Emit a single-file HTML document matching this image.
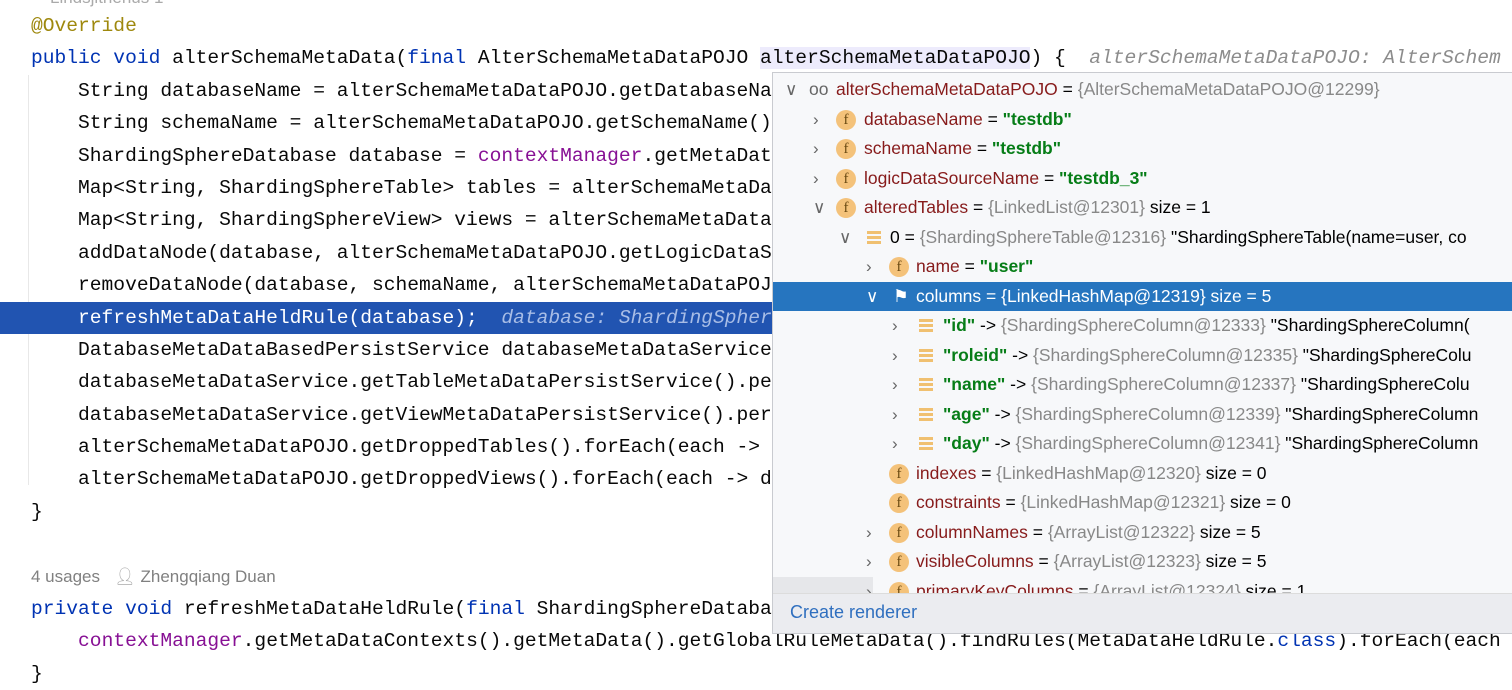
<!DOCTYPE html>
<html><head><meta charset="utf-8"><style>
body{margin:0;width:1512px;height:666px;overflow:hidden;background:#fff;position:relative;font-family:"Liberation Mono",monospace;}
.code{position:absolute;left:0;top:10px;width:1512px;font-size:19.6px;line-height:32.4px;color:#080808;}
.code div{height:32.4px;padding-left:31px;white-space:pre}
.kw{color:#0033b3}.an{color:#9e880d}.pu{color:#871094}.hint{color:#8c8c8c;font-style:italic}
.sel{background:#2154b1;color:#fff}
.sel .hint{color:#a8bde6}
.meta{font-family:"Liberation Sans",sans-serif;font-size:17px;color:#808080}
.guide{position:absolute;left:28px;width:1px;background:#e8e8e8}
.pop{position:absolute;left:772px;top:72px;width:740px;height:560px;background:#f7f8fa;border:1px solid #c9cbd0;border-right:none;font-family:"Liberation Sans",sans-serif;font-size:17.5px;overflow:hidden}
.rows{position:absolute;left:0;top:2px;width:740px;height:518px;overflow:hidden}
.r{position:absolute;left:0;height:29.5px;line-height:29.5px;width:740px;white-space:nowrap}
.r.hl{background:#2675bf;color:#fff}
.ch{position:absolute;top:0;color:#666;font-size:17px}
.hl .ch{color:#fff}
.ic{position:absolute;top:5px;width:20px;height:20px;border-radius:50%;background:#f4c27a;color:#6b4a12;font-size:15px;line-height:20px;text-align:center;font-family:"Liberation Serif",serif}
.ln{position:absolute;top:8px;width:14px;height:14px;background:repeating-linear-gradient(#f0c070 0 3px,transparent 3px 5px)}
.t{position:absolute;top:0}
.n{color:#871b1b}.hl .n{color:#fff}
.g{color:#888}.hl .g{color:#fff}
.s{color:#067d17;font-weight:bold}
.bar{position:absolute;left:0;top:520px;width:740px;height:40px;background:#ebecf0;border-top:1px solid #dcdcdc}
.bar span{position:absolute;left:17px;top:8px;color:#2f6fbf;font-size:18px}
</style></head><body>
<div style="position:absolute;left:50px;top:-12px;font-family:'Liberation Sans',sans-serif;font-size:17px;color:#aaa">Lindsjithenus 1</div>
<div class="guide" style="top:75px;height:410px"></div>
<div class="code"><div class="an">@Override</div><div><span class="kw">public void</span> alterSchemaMetaData(<span class="kw">final</span> AlterSchemaMetaDataPOJO <span style="background:#edebfc">alterSchemaMetaDataPOJO</span>) {  <span class="hint">alterSchemaMetaDataPOJO: AlterSchem</span></div><div>    String databaseName = alterSchemaMetaDataPOJO.getDatabaseName();</div><div>    String schemaName = alterSchemaMetaDataPOJO.getSchemaName();</div><div>    ShardingSphereDatabase database = <span class="pu">contextManager</span>.getMetaData</div><div>    Map&lt;String, ShardingSphereTable&gt; tables = alterSchemaMetaData</div><div>    Map&lt;String, ShardingSphereView&gt; views = alterSchemaMetaData</div><div>    addDataNode(database, alterSchemaMetaDataPOJO.getLogicDataS</div><div>    removeDataNode(database, schemaName, alterSchemaMetaDataPOJ</div><div class="sel">    refreshMetaDataHeldRule(database);  <span class="hint">database: ShardingSphere</span></div><div>    DatabaseMetaDataBasedPersistService databaseMetaDataService</div><div>    databaseMetaDataService.getTableMetaDataPersistService().pe</div><div>    databaseMetaDataService.getViewMetaDataPersistService().per</div><div>    alterSchemaMetaDataPOJO.getDroppedTables().forEach(each -&gt; </div><div>    alterSchemaMetaDataPOJO.getDroppedViews().forEach(each -&gt; d</div><div>}</div><div></div><div class="meta">4 usages   <span style="color:#aaa">&#x1F464;&#xFE0E;</span> Zhengqiang Duan</div><div><span class="kw">private void</span> refreshMetaDataHeldRule(<span class="kw">final</span> ShardingSphereDataba</div><div>    <span class="pu">contextManager</span>.getMetaDataContexts().getMetaData().getGlobalRuleMetaData().findRules(MetaDataHeldRule.<span class="kw">class</span>).forEach(each -&gt;</div><div>}</div></div>
<div class="pop"><div class="rows">
<div class="r" style="top:0"><span class="ch" style="left:12px">&#8744;</span><span class="t g" style="left:36px;color:#666">oo</span><span class="t" style="left:63px"><span class="n">alterSchemaMetaDataPOJO</span> = <span class="g">{AlterSchemaMetaDataPOJO@12299}</span></span></div>
<div class="r" style="top:29.5px"><span class="ch" style="left:40px">&#8250;</span><span class="ic" style="left:63px">f</span><span class="t" style="left:91px"><span class="n">databaseName</span> = <span class="s">"testdb"</span></span></div>
<div class="r" style="top:59px"><span class="ch" style="left:40px">&#8250;</span><span class="ic" style="left:63px">f</span><span class="t" style="left:91px"><span class="n">schemaName</span> = <span class="s">"testdb"</span></span></div>
<div class="r" style="top:88.5px"><span class="ch" style="left:40px">&#8250;</span><span class="ic" style="left:63px">f</span><span class="t" style="left:91px"><span class="n">logicDataSourceName</span> = <span class="s">"testdb_3"</span></span></div>
<div class="r" style="top:118px"><span class="ch" style="left:40px">&#8744;</span><span class="ic" style="left:63px">f</span><span class="t" style="left:91px"><span class="n">alteredTables</span> = <span class="g">{LinkedList@12301}</span>  size = 1</span></div>
<div class="r" style="top:147.5px"><span class="ch" style="left:66px">&#8744;</span><span class="ln" style="left:94px"></span><span class="t" style="left:117px">0 = <span class="g">{ShardingSphereTable@12316}</span> "ShardingSphereTable(name=user, co</span></div>
<div class="r" style="top:177px"><span class="ch" style="left:93px">&#8250;</span><span class="ic" style="left:116px">f</span><span class="t" style="left:143px"><span class="n">name</span> = <span class="s">"user"</span></span></div>
<div class="r hl" style="top:206.5px"><span class="ch" style="left:93px">&#8744;</span><span class="t" style="left:120px">&#9873;&#xFE0E;</span><span class="t" style="left:143px"><span class="n">columns</span> = {LinkedHashMap@12319}  size = 5</span></div>
<div class="r" style="top:236px"><span class="ch" style="left:119px">&#8250;</span><span class="ln" style="left:146px"></span><span class="t" style="left:170px"><span class="s">"id"</span> -&gt; <span class="g">{ShardingSphereColumn@12333}</span> "ShardingSphereColumn(</span></div>
<div class="r" style="top:265.5px"><span class="ch" style="left:119px">&#8250;</span><span class="ln" style="left:146px"></span><span class="t" style="left:170px"><span class="s">"roleid"</span> -&gt; <span class="g">{ShardingSphereColumn@12335}</span> "ShardingSphereColu</span></div>
<div class="r" style="top:295px"><span class="ch" style="left:119px">&#8250;</span><span class="ln" style="left:146px"></span><span class="t" style="left:170px"><span class="s">"name"</span> -&gt; <span class="g">{ShardingSphereColumn@12337}</span> "ShardingSphereColu</span></div>
<div class="r" style="top:324.5px"><span class="ch" style="left:119px">&#8250;</span><span class="ln" style="left:146px"></span><span class="t" style="left:170px"><span class="s">"age"</span> -&gt; <span class="g">{ShardingSphereColumn@12339}</span> "ShardingSphereColumn</span></div>
<div class="r" style="top:354px"><span class="ch" style="left:119px">&#8250;</span><span class="ln" style="left:146px"></span><span class="t" style="left:170px"><span class="s">"day"</span> -&gt; <span class="g">{ShardingSphereColumn@12341}</span> "ShardingSphereColumn</span></div>
<div class="r" style="top:383.5px"><span class="ic" style="left:116px">f</span><span class="t" style="left:143px"><span class="n">indexes</span> = <span class="g">{LinkedHashMap@12320}</span>  size = 0</span></div>
<div class="r" style="top:413px"><span class="ic" style="left:116px">f</span><span class="t" style="left:143px"><span class="n">constraints</span> = <span class="g">{LinkedHashMap@12321}</span>  size = 0</span></div>
<div class="r" style="top:442.5px"><span class="ch" style="left:93px">&#8250;</span><span class="ic" style="left:116px">f</span><span class="t" style="left:143px"><span class="n">columnNames</span> = <span class="g">{ArrayList@12322}</span>  size = 5</span></div>
<div class="r" style="top:472px"><span class="ch" style="left:93px">&#8250;</span><span class="ic" style="left:116px">f</span><span class="t" style="left:143px"><span class="n">visibleColumns</span> = <span class="g">{ArrayList@12323}</span>  size = 5</span></div>
<div class="r" style="top:501.5px"><span style="position:absolute;left:0;top:0;width:100px;height:30px;background:#e6e7ea"></span><span class="ch" style="left:93px">&#8250;</span><span class="ic" style="left:116px">f</span><span class="t" style="left:143px"><span class="n">primaryKeyColumns</span> = <span class="g">{ArrayList@12324}</span>  size = 1</span></div>
</div>
<div class="bar"><span>Create renderer</span></div>
</div>
</body></html>
